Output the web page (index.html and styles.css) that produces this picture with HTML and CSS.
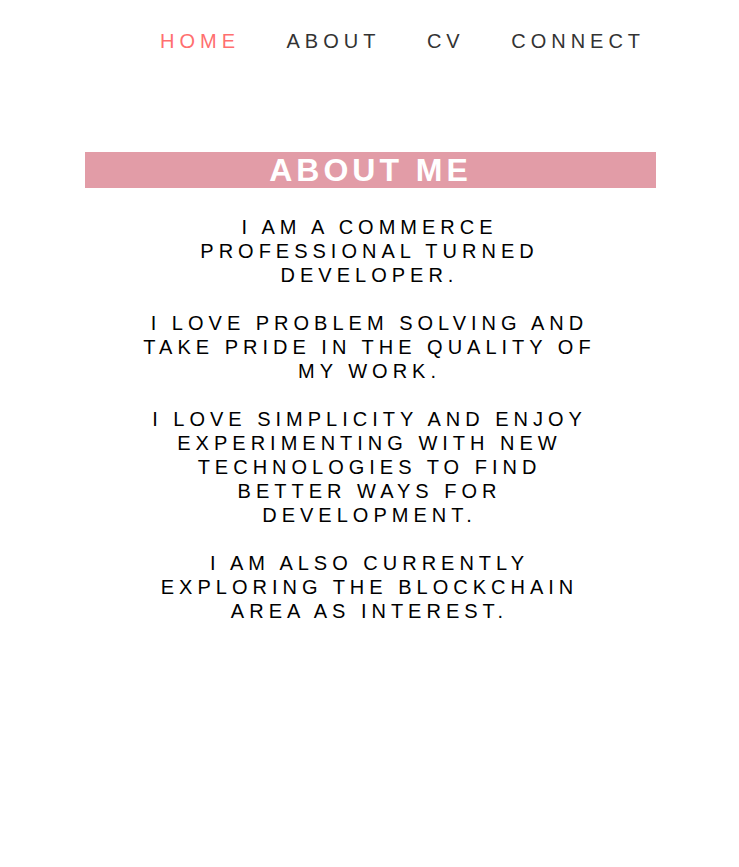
FILE: index.html
```html
<!DOCTYPE html>
<html lang="en">
<head>
<meta charset="utf-8">
<title>About Me</title>
<link rel="stylesheet" href="styles.css">
</head>
<body>
<header class="site-header">
  <nav class="nav">
    <a class="nav-link active" href="#">HOME</a>
    <a class="nav-link" href="#">ABOUT</a>
    <a class="nav-link" href="#">CV</a>
    <a class="nav-link" href="#">CONNECT</a>
  </nav>
</header>
<main class="about">
  <h1 class="about-title">ABOUT ME</h1>
  <div class="about-text">
    <p>I AM A COMMERCE PROFESSIONAL TURNED DEVELOPER.</p>
    <p>I LOVE PROBLEM SOLVING AND TAKE PRIDE IN THE QUALITY OF MY WORK.</p>
    <p>I LOVE SIMPLICITY AND ENJOY EXPERIMENTING WITH NEW TECHNOLOGIES TO FIND BETTER WAYS FOR DEVELOPMENT.</p>
    <p>I AM ALSO CURRENTLY EXPLORING THE BLOCKCHAIN AREA AS INTEREST.</p>
  </div>
</main>
</body>
</html>
```

FILE: styles.css
```css
html, body {
  margin: 0;
  padding: 0;
  background: #ffffff;
  font-family: "Liberation Sans", Arial, sans-serif;
}

.site-header {
  padding-top: 29px;
}

.nav {
  display: flex;
  justify-content: flex-start;
  gap: 46.5px;
  padding-left: 160px;
}

.nav-link {
  font-size: 20px;
  line-height: 24px;
  letter-spacing: 5px;
  color: #333333;
  text-decoration: none;
}

.nav-link.active {
  color: #ff6f6f;
}

.about {
  padding-top: 99px;
}

.about-title {
  margin: 0 83px 0 85px;
  background: #e29ca7;
  color: #ffffff;
  font-size: 32px;
  font-weight: bold;
  letter-spacing: 4px;
  line-height: 36px;
  text-align: center;
}

.about-text {
  width: 460px;
  margin: 27px auto 0;
  text-align: center;
}

.about-text p {
  margin: 0 0 24px;
  font-size: 20px;
  line-height: 24px;
  letter-spacing: 5px;
  color: #000000;
}
```
